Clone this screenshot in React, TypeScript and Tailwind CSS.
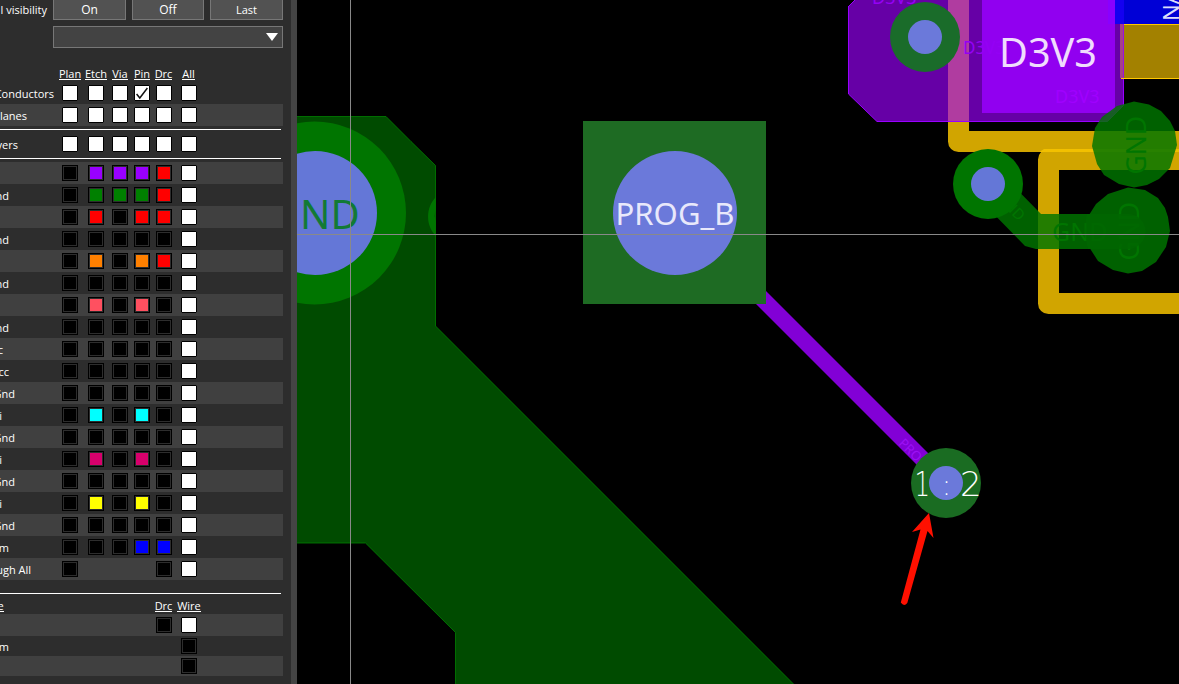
import React from "react";

const P = "#9900ff";
const G = "#008000";
const R = "#ff0000";
const K = "#000000";

type Layer = { label: string; end: number; cells: (string | null)[] };

const LAYERS: Layer[] = [
  { label: "", end: 0, cells: [K, P, P, P, R] },
  { label: "nd", end: 9, cells: [K, G, G, G, R] },
  { label: "", end: 0, cells: [K, R, K, R, R] },
  { label: "nd", end: 9, cells: [K, K, K, K, K] },
  { label: "", end: 0, cells: [K, "#ff8000", K, "#ff8000", R] },
  { label: "nd", end: 9, cells: [K, K, K, K, K] },
  { label: "", end: 0, cells: [K, "#ff5060", K, "#ff5060", K] },
  { label: "nd", end: 9, cells: [K, K, K, K, K] },
  { label: "c", end: 3, cells: [K, K, K, K, K] },
  { label: "cc", end: 9, cells: [K, K, K, K, K] },
  { label: "Gnd", end: 15, cells: [K, K, K, K, K] },
  { label: "i", end: 2, cells: [K, "#00ffff", K, "#00ffff", K] },
  { label: "Gnd", end: 15, cells: [K, K, K, K, K] },
  { label: "i", end: 2, cells: [K, "#d8006c", K, "#d8006c", K] },
  { label: "Gnd", end: 15, cells: [K, K, K, K, K] },
  { label: "i", end: 2, cells: [K, "#ffff00", K, "#ffff00", K] },
  { label: "Gnd", end: 15, cells: [K, K, K, K, K] },
  { label: "m", end: 9, cells: [K, K, K, "#0000ff", "#0000ff"] },
  { label: "ugh All", end: 31, cells: [K, null, null, null, K] },
];

const COLS = "grid grid-cols-[26px_24px_22px_22px_25px_16px]";

function Swatch({ color }: { color: string }) {
  return (
    <span className="block size-4 border border-black bg-[#2d2d2d] p-px">
      <span className="block size-full" style={{ backgroundColor: color }} />
    </span>
  );
}

function Check({ checked = false }: { checked?: boolean }) {
  return (
    <span className="block size-4 rounded-[1px] border border-black bg-white">
      {checked && (
        <svg viewBox="0 0 14 14" className="block size-full">
          <path d="M1.600 8 4.800 12 12.400 2" fill="none" stroke="#111" strokeWidth="1.500" />
        </svg>
      )}
    </span>
  );
}

function Label({ text, end }: { text: string; end: number }) {
  return (
    <span className="flex w-[62px] shrink-0">
      <span className="flex justify-end whitespace-nowrap pt-px" style={{ width: end }}>
        {text}
      </span>
    </span>
  );
}

function ToggleRow({ label, end, shade, checked }: { label: string; end: number; shade?: boolean; checked?: number }) {
  return (
    <div className={`flex h-[22px] w-[283px] items-center ${shade ? "bg-[#404040]" : ""}`}>
      <Label text={label} end={end} />
      <div className={`${COLS} -mt-px`}>
        {[0, 1, 2, 3, 4, 5].map((i) => (
          <Check key={i} checked={i === checked} />
        ))}
      </div>
    </div>
  );
}

function Head({ children, className }: { children: React.ReactNode; className: string }) {
  return (
    <span className={`flex shrink-0 justify-center whitespace-nowrap border-b border-white pt-px leading-[11px] ${className}`}>
      {children}
    </span>
  );
}

function Sidebar() {
  const button = "h-[30px] -mt-[10px] border border-[#777] bg-[#525252] flex items-center justify-center pt-[9px]";
  return (
    <aside className="flex h-full w-[297px] shrink-0 flex-col overflow-hidden border-r-[6px] border-[#444] bg-[#2d2d2d] font-['Open_Sans','Noto_Sans',sans-serif] text-[11px] leading-none text-white">
      <div className="flex h-[26px] items-start">
        <span className="flex w-[47px] justify-end whitespace-nowrap pt-[3px] leading-[13px]">l visibility</span>
        <div className="ml-[6px] flex gap-[6px]">
          <div className={`${button} w-[73px] text-xs`}>On</div>
          <div className={`${button} w-[72px] text-xs`}>Off</div>
          <div className={`${button} w-[73px]`}>Last</div>
        </div>
      </div>
      <div className="ml-[53px] flex h-[22px] w-[230px] shrink-0 items-center justify-end border border-[#777] bg-[#434343] pr-1">
        <svg viewBox="0 0 12 8" className="h-2 w-3">
          <path d="M0 0h12L6 8z" fill="#fff" />
        </svg>
      </div>
      <div className="mt-[19px] flex h-[15px] shrink-0 items-start pl-[59px]">
        <Head className="w-[22px]">Plan</Head>
        <Head className="ml-[4px] w-[22px]">Etch</Head>
        <Head className="ml-[5px] w-[16px]">Via</Head>
        <Head className="ml-[6px] w-[16px]">Pin</Head>
        <Head className="ml-[5px] w-[17px]">Drc</Head>
        <Head className="ml-[10px] w-[13px]">All</Head>
      </div>
      <div className="flex shrink-0 flex-col">
        <ToggleRow label="Conductors" end={54} checked={3} />
        <ToggleRow label="lanes" end={27} shade />
      </div>
      <div className="mt-[3px] h-px w-[281px] shrink-0 bg-white" />
      <div className="mt-[3px] shrink-0">
        <ToggleRow label="yers" end={18} />
      </div>
      <div className="mt-[3px] h-px w-[281px] shrink-0 bg-white" />
      <div className="mt-[3px] flex shrink-0 flex-col">
        {LAYERS.map((layer, i) => (
          <div key={i} className={`flex h-[22px] w-[283px] items-center ${i % 2 ? "" : "bg-[#404040]"}`}>
            <Label text={layer.label} end={layer.end} />
            <div className={COLS}>
              {layer.cells.map((c, j) => (c ? <Swatch key={j} color={c} /> : <span key={j} />))}
              <Check />
            </div>
          </div>
        ))}
      </div>
      <div className="mt-[13px] h-px w-[281px] shrink-0 bg-white" />
      <div className="flex h-5 shrink-0 items-start pt-[5px]">
        <Head className="-ml-[3px] w-[7px]">e</Head>
        <Head className="ml-[151px] w-[17px]">Drc</Head>
        <Head className="ml-[5px] w-[24px]">Wire</Head>
      </div>
      <div className="flex h-[22px] w-[283px] shrink-0 items-center gap-[9px] bg-[#404040] pl-[156px]">
        <Swatch color={K} />
        <Check />
      </div>
      <div className="flex h-5 w-[283px] shrink-0 items-center">
        <Label text="m" end={9} />
        <span className="ml-[119px]">
          <Swatch color={K} />
        </span>
      </div>
      <div className="flex h-5 w-[283px] shrink-0 items-center bg-[#404040] pl-[181px]">
        <Swatch color={K} />
      </div>
    </aside>
  );
}

function Board() {
  return (
    <svg viewBox="297 0 882 684" className="block h-full w-[882px] bg-black font-['Noto_Sans',sans-serif]">
      {/* ground pour */}
      <path
        d="M290 116.5H386L411 141.5L435.500 165.500V326L794 684.500H455.500V632.500L365.500 543H290Z"
        fill="#004b00"
        stroke="#008000"
        strokeWidth="0.800"
      />
      <circle cx="314.500" cy="213" r="91.500" fill="#007500" />
      <circle cx="315" cy="213" r="62" fill="#6477d7" />
      <text x="300" y="229" fontSize="40" fill="#127a35">ND</text>
      <path d="M436 197C425.500 207 425.500 226 436 236V221Q433.500 215.500 436 210Z" fill="#007500" />

      {/* signal trace and pad */}
      <path d="M758 294.500L946 482.500" stroke="#8200d6" strokeWidth="16.300" />
      <text transform="translate(898 444) rotate(45)" fontSize="13" fill="#9c10f4">PROG</text>
      <rect x="583" y="121" width="183" height="183" fill="#1e6b23" />
      <circle cx="675" cy="213" r="62" fill="#6b79da" />
      <text x="615.500" y="225" fontSize="31" fill="#e8e8fb" textLength="119" lengthAdjust="spacingAndGlyphs">PROG_B</text>
      <circle cx="946" cy="483" r="35" fill="#1a6c22" />
      <circle cx="946" cy="483" r="17" fill="#6b79da" />
      <g fill="#fff" fontSize="34" fontWeight="200" fontFamily="DejaVu Sans">
        <text transform="translate(914.500 496) scale(0.720 1)">1</text>
        <text x="960" y="496">2</text>
      </g>
      <text x="941.800" y="495" fontSize="28" fontFamily="DejaVu Sans" fontWeight="200" fill="#fff">:</text>

      {/* silkscreen */}
      <path d="M958.500 -5V141.500H1190" fill="none" stroke="#d1a500" strokeWidth="21" strokeLinejoin="round" />
      <path d="M1190 159.500H1048.500V303.500H1190" fill="none" stroke="#d1a500" strokeWidth="21" strokeLinejoin="round" />
      <path d="M1044 149H1179V152H1039.500Z" fill="#f2c000" />

      {/* D3V3 shape */}
      <path d="M848.500 -5V94L877 121.500H1107.500L1123.500 105.500V-5Z" fill="#6600a6" stroke="#9900ff" />
      <path d="M848 0H855L848 7Z" fill="#000" />
      <path d="M855 0L848 7" stroke="#9900ff" />
      <rect x="948" y="0" width="21" height="121" fill="#b03ca0" />
      <rect x="982" y="0" width="133" height="113" fill="#9100f0" />
      <rect x="1121.500" y="24.500" width="60" height="54" fill="#a38100" stroke="#ffc800" />
      <rect x="1120" y="24" width="3" height="54" fill="#a5408a" />
      <rect x="1123" y="24" width="1" height="54" fill="#9a10e0" />
      <rect x="1108" y="0" width="7" height="24" fill="#8800ff" />
      <rect x="1115" y="0" width="64" height="24" fill="#0000d6" />
      <rect x="1115" y="0" width="9" height="24" fill="#1400f0" />
      <g fontSize="18" fill="#9500f5">
        <text x="872" y="4">D3V3</text>
        <text x="963" y="54" textLength="42" lengthAdjust="spacingAndGlyphs">D3V3</text>
        <text x="1055" y="103" fill="#a000ff">D3V3</text>
      </g>
      <text x="999" y="67" fontSize="40" fill="#f0dcfd" textLength="98" lengthAdjust="spacingAndGlyphs">D3V3</text>
      <text transform="translate(1179 21) rotate(-90)" fontSize="22" fill="#dcdcfb">NA</text>
      <circle cx="925" cy="37" r="35" fill="#1a6c2a" />
      <circle cx="925" cy="37" r="17" fill="#6b79da" />

      {/* ground pads */}
      <g opacity="0.830" fill="#007500">
        <path d="M1134 101.500L1149 104.500L1161 111L1170 121L1175 131L1177 145L1170 168L1159 179L1147 185L1134 187.500L1119 184L1104 175L1097 164L1092 146L1095 128L1102 117L1117 106Z" />
        <path d="M1128 187.500L1145 190L1158 198L1165 208L1168 217L1170 231L1166 247L1156 262L1142 271L1128 273.500L1113 270L1098 261L1089 247L1086 231L1089 215L1096 204L1108 194Z" />
        <path d="M1000 172L1041 214H1128V249H1036L1025 246L984 204Z" />
      </g>
      <path d="M1124 105L1108 121H1100L1117 107Z" fill="#1a5c28" opacity="0.800" />
      <g fill="#007500">
        <text transform="translate(1145.500 174.500) rotate(-90)" fontSize="26.500" textLength="58.500" lengthAdjust="spacingAndGlyphs">GND</text>
        <text transform="translate(1138.500 260.500) rotate(-90)" fontSize="26.500" textLength="58.500" lengthAdjust="spacingAndGlyphs">GND</text>
        <text x="1052" y="241" fontSize="25">GND</text>
        <text transform="translate(1003 206) rotate(45)" fontSize="15">ND</text>
      </g>
      <path d="M1087 214H1128A17.500 17.500 0 0 1 1128 249H1088Q1083 231 1087 214Z" fill="#006600" opacity="0.850" />
      <circle cx="988" cy="184" r="35" fill="#007500" />
      <circle cx="988" cy="184" r="17" fill="#6477d7" />

      {/* pointer */}
      <path d="M929 513L933.500 538L927.500 531L907.300 603Q904 607 900.800 602.500L920.500 529.500L912 532Z" fill="#ff1000" />

      {/* cursor crosshair */}
      <path d="M350.500 0V684M297 234.500H1179" stroke="#898989" shapeRendering="crispEdges" />
    </svg>
  );
}

export default function App() {
  return (
    <main className="flex h-[684px] w-[1179px] overflow-hidden bg-black">
      <Sidebar />
      <Board />
    </main>
  );
}
